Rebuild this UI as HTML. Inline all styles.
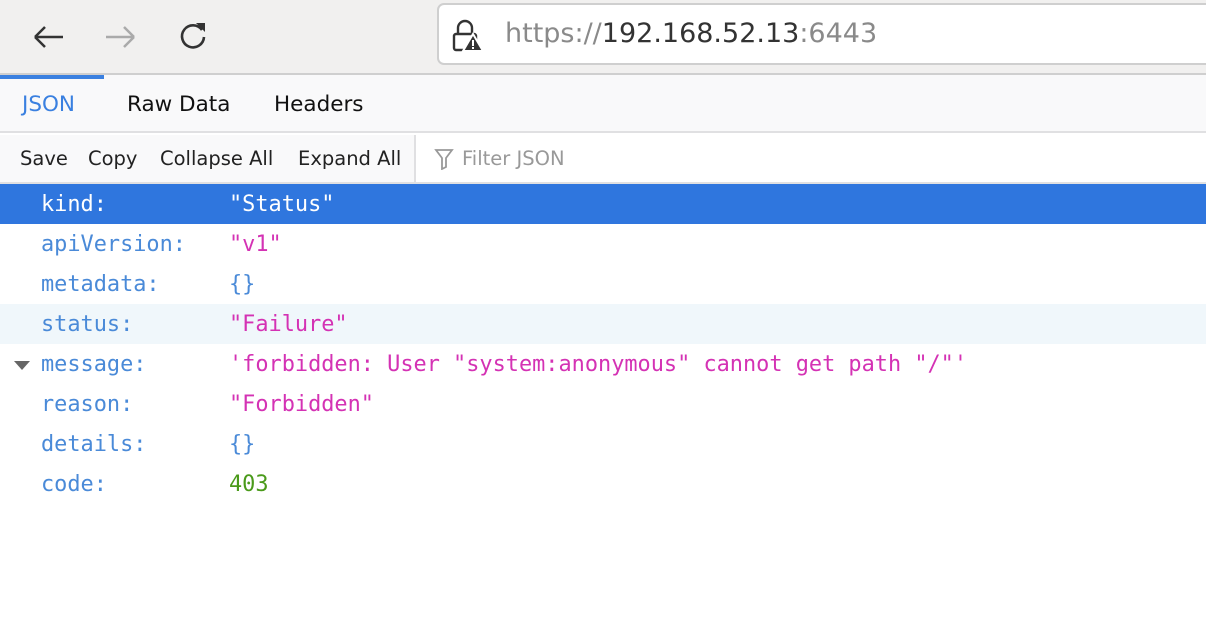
<!DOCTYPE html>
<html><head><meta charset="utf-8"><style>
*{margin:0;padding:0;box-sizing:border-box}
body{width:1206px;height:624px;overflow:hidden;background:#fff;font-family:"Liberation Sans","DejaVu Sans",sans-serif;position:relative}
.nav{position:absolute;left:0;top:0;width:1206px;height:75px;background:#f1f0ef;border-bottom:2px solid #cfcfcf}
.url{position:absolute;left:437px;top:3px;width:780px;height:62px;background:#fff;border:2px solid #cfcfcf;border-radius:7px}
.utext{position:absolute;left:66px;top:13px;color:#333;font-family:"DejaVu Sans",sans-serif;font-size:27px;transform:scaleX(1.0);transform-origin:left;white-space:nowrap}
.g{color:#8a8a8a}
.tabs{position:absolute;left:0;top:75px;width:1206px;height:58px;background:#f9f9fa;border-bottom:2px solid #e0e0e2}
.tabs div{position:absolute;top:17px;color:#111;font-family:"DejaVu Sans",sans-serif;font-size:21.5px}
.tabsel{position:absolute;left:0;top:75px;width:104px;height:4px;background:#3a80e0}
.tb{position:absolute;left:0;top:135px;width:1206px;height:48px;background:#f9f9fa}
.tb div{position:absolute;top:12px;font-family:"DejaVu Sans",sans-serif;font-size:19.5px;color:#222;white-space:nowrap}
.filt{position:absolute;left:414px;top:135px;width:792px;height:47px;background:#fff;border-left:2px solid #e0e0e2}
.row{position:absolute;left:0;width:1206px;height:40px;font-family:"DejaVu Sans Mono",monospace;font-size:21.9px;line-height:42px}
.k{position:absolute;left:41px;color:#4a8ad8}
.v{position:absolute;left:229px;color:#d432b4;white-space:pre}
.sel{background:#2f76de}.sel .k,.sel .v{color:#fff}
.hov{background:#f0f7fb}
</style></head><body>
<div class="nav">
<svg style="position:absolute;left:30px;top:22px" width="36" height="30" viewBox="0 0 36 30"><path d="M5 15H33M5 15L15 5M5 15L15 25" stroke="#333" stroke-width="2.5" fill="none"/></svg>
<svg style="position:absolute;left:103px;top:22px" width="36" height="30" viewBox="0 0 36 30"><path d="M31 15H3M31 15L21 5M31 15L21 25" stroke="#aaa" stroke-width="2.5" fill="none"/></svg>
<svg style="position:absolute;left:176px;top:20px" width="34" height="34" viewBox="0 0 34 34"><path d="M26 10A11 11 0 1 0 28 17" stroke="#333" stroke-width="2.6" fill="none"/><path d="M20 3L29 3L29 12Z" fill="#333"/></svg>
<div class="url">
<svg style="position:absolute;left:12px;top:14px" width="34" height="34" viewBox="0 0 34 34"><path d="M7 15V9a7 7 0 0 1 14 0v6" stroke="#333" stroke-width="2.4" fill="none"/><rect x="3" y="15" width="22" height="16" rx="2" stroke="#333" stroke-width="2.4" fill="none"/><path d="M22 15L32 32H12Z" fill="#333" stroke="#fff" stroke-width="2"/><rect x="21" y="21" width="2" height="6" fill="#fff"/><rect x="21" y="28" width="2" height="2" fill="#fff"/></svg>
<div class="utext"><span class="g">https://</span>192.168.52.13<span class="g">:6443</span></div>
</div>
</div>
<div class="tabs"><div style="left:22px;color:#3a80e0">JSON</div><div style="left:127px">Raw Data</div><div style="left:274px">Headers</div></div>
<div class="tabsel"></div>
<div class="tb"><div style="left:20px">Save</div><div style="left:88px">Copy</div><div style="left:160px">Collapse All</div><div style="left:298px">Expand All</div></div>
<div class="filt">
<svg style="position:absolute;left:18px;top:13px" width="20" height="22" viewBox="0 0 20 22"><path d="M2 2H18L12 10V19L8 21V10Z" stroke="#999" stroke-width="1.8" fill="none"/></svg>
<div style="position:absolute;left:46px;top:12px;font-family:'DejaVu Sans',sans-serif;font-size:19.5px;color:#999">Filter JSON</div>
</div>
<div style="position:absolute;left:0;top:182px;width:1206px;height:2px;background:#e0e0e2"></div>
<div class="row sel" style="top:184px"><span class="k">kind:</span><span class="v">"Status"</span></div>
<div class="row" style="top:224px"><span class="k">apiVersion:</span><span class="v">"v1"</span></div>
<div class="row" style="top:264px"><span class="k">metadata:</span><span class="v" style="color:#4a8ad8">{}</span></div>
<div class="row hov" style="top:304px"><span class="k">status:</span><span class="v">"Failure"</span></div>
<div class="row" style="top:344px"><svg style="position:absolute;left:14px;top:17px" width="16" height="10"><path d="M0 0H16L8 9Z" fill="#666"/></svg><span class="k">message:</span><span class="v">'forbidden: User "system:anonymous" cannot get path "/"'</span></div>
<div class="row" style="top:384px"><span class="k">reason:</span><span class="v">"Forbidden"</span></div>
<div class="row" style="top:424px"><span class="k">details:</span><span class="v" style="color:#4a8ad8">{}</span></div>
<div class="row" style="top:464px"><span class="k">code:</span><span class="v" style="color:#4a9a1a">403</span></div>
</body></html>
